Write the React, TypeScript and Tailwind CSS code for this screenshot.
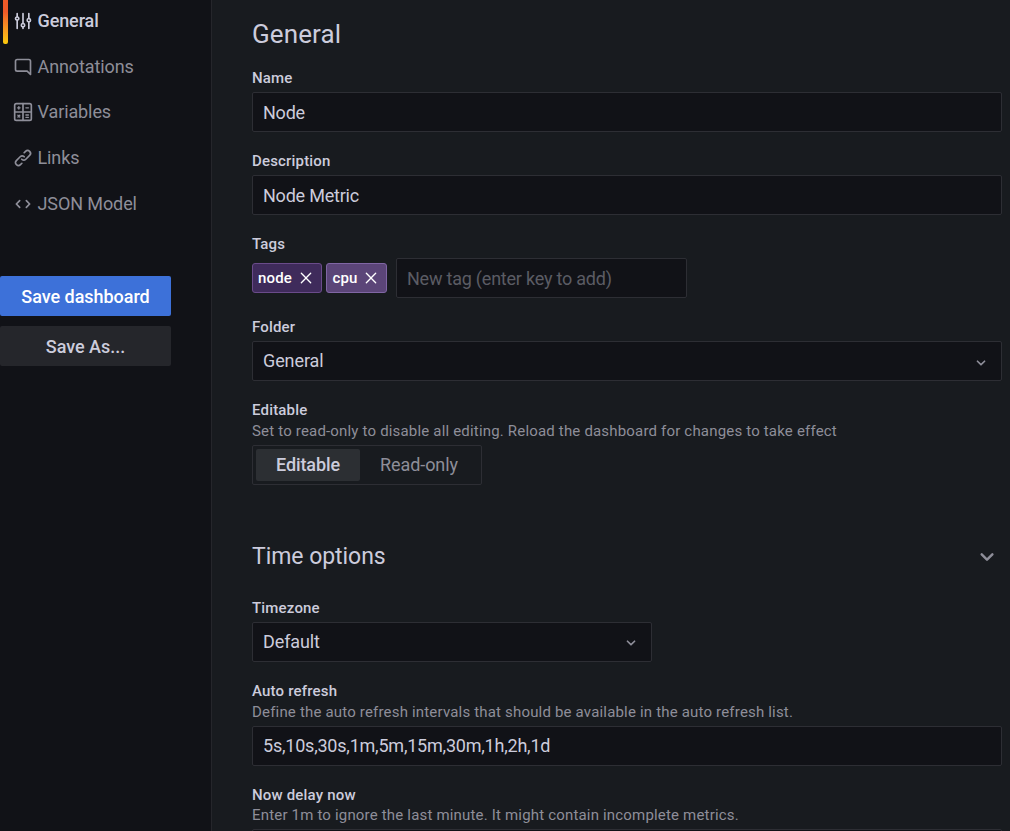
import type { ReactNode } from "react";

const paths = {
  sliders:
    "M20,8.18V3a1,1,0,0,0-2,0V8.18a3,3,0,0,0,0,5.64V21a1,1,0,0,0,2,0V13.82a3,3,0,0,0,0-5.64ZM19,12a1,1,0,1,1,1-1A1,1,0,0,1,19,12Zm-6,2.18V3a1,1,0,0,0-2,0V14.18a3,3,0,0,0,0,5.64V21a1,1,0,0,0,2,0V19.82a3,3,0,0,0,0-5.64ZM12,18a1,1,0,1,1,1-1A1,1,0,0,1,12,18ZM6,6.18V3A1,1,0,0,0,4,3V6.18a3,3,0,0,0,0,5.64V21a1,1,0,0,0,2,0V11.82A3,3,0,0,0,6,6.18ZM5,10A1,1,0,1,1,6,9,1,1,0,0,1,5,10Z",
  comment:
    "M19,2H5A3,3,0,0,0,2,5V15a3,3,0,0,0,3,3H16.59l3.7,3.71A1,1,0,0,0,21,22a.84.84,0,0,0,.38-.08A1,1,0,0,0,22,21V5A3,3,0,0,0,19,2Zm1,16.59-2.29-2.3A1,1,0,0,0,17,16H5a1,1,0,0,1-1-1V5A1,1,0,0,1,5,4H19a1,1,0,0,1,1,1Z",
  link: "M10,17.55,8.23,19.27a2.47,2.47,0,0,1-3.5-3.5l4.54-4.55a2.46,2.46,0,0,1,3.39-.09l.12.1a1,1,0,0,0,1.4-1.43A2.75,2.75,0,0,0,14,9.59a4.46,4.46,0,0,0-6.09.22L3.31,14.36a4.48,4.48,0,0,0,6.33,6.33L11.37,19A1,1,0,0,0,10,17.55ZM20.69,3.31a4.49,4.49,0,0,0-6.33,0L12.63,5A1,1,0,0,0,14,6.45l1.73-1.72a2.47,2.47,0,0,1,3.5,3.5l-4.54,4.55a2.46,2.46,0,0,1-3.39.09l-.12-.1a1,1,0,0,0-1.4,1.43,2.75,2.75,0,0,0,.23.21,4.47,4.47,0,0,0,6.09-.22l4.55-4.55A4.49,4.49,0,0,0,20.69,3.31Z",
  code: "M8.71,7.29a1,1,0,0,0-1.42,0l-4,4a1,1,0,0,0,0,1.42l4,4a1,1,0,0,0,1.42,0,1,1,0,0,0,0-1.42L5.41,12l3.3-3.29A1,1,0,0,0,8.71,7.29Zm12,4-4-4a1,1,0,0,0-1.42,1.42L18.59,12l-3.3,3.29a1,1,0,0,0,0,1.42,1,1,0,0,0,1.42,0l4-4A1,1,0,0,0,20.71,11.29Z",
  angleDown:
    "M17,9.17a1,1,0,0,0-1.41,0L12,12.71,8.46,9.17a1,1,0,0,0-1.41,0,1,1,0,0,0,0,1.42l4.24,4.24a1,1,0,0,0,1.42,0L17,10.59A1,1,0,0,0,17,9.17Z",
  times:
    "M13.41,12l6.3-6.29a1,1,0,1,0-1.42-1.42L12,10.59,5.71,4.29A1,1,0,0,0,4.29,5.71L10.59,12l-6.3,6.29a1,1,0,1,0,1.42,1.42L12,13.41l6.29,6.3a1,1,0,0,0,1.42-1.42Z",
};

function Icon({ name, className = "size-5" }: { name: keyof typeof paths; className?: string }) {
  return (
    <svg viewBox="0 0 24 24" fill="currentColor" className={`shrink-0 ${className}`}>
      <path d={paths[name]} />
    </svg>
  );
}

function CalculatorIcon() {
  return (
    <svg viewBox="0 0 24 24" fill="none" stroke="currentColor" strokeWidth="2" strokeLinecap="round" className="size-5 shrink-0">
      <rect x="2" y="2" width="20" height="20" rx="2" />
      <path d="M12 2v20M2 12h20" />
      <path d="M5.5 7h3M7 5.5v3M15.5 7h3M5.9 15.9l2.2 2.2M8.1 15.9l-2.2 2.2M15.5 15.6h3M15.5 18.4h3" strokeWidth="1.7" />
    </svg>
  );
}

function NavItem({ icon, label, active = false }: { icon: ReactNode; label: string; active?: boolean }) {
  return (
    <li
      className={
        active
          ? "relative flex h-[45.75px] items-center gap-[4.5px] pl-[13px] font-medium text-[#ccccdc]"
          : "relative flex h-[45.75px] items-center gap-[4.5px] pl-[13px] text-[#8e8e99]"
      }
    >
      {active && (
        <span className="absolute top-0 left-[3px] h-[46px] w-[5px] rounded-[2px] bg-linear-to-b from-[#f05a28] from-30% to-[#fbca0a]" />
      )}
      {icon}
      <span className="pb-px">{label}</span>
    </li>
  );
}

const frame = "flex h-10 items-center rounded-[2px] border border-[#2d2e34] bg-[#111217] px-[10px]";

function Field({ label, hint, children }: { label: string; hint?: ReactNode; children: ReactNode }) {
  return (
    <div className="mb-5">
      <div className="mb-[5px] text-[15px] leading-[18px] font-medium tracking-[0.18px]">
        {label}
        {hint}
      </div>
      {children}
    </div>
  );
}

function Hint({ children, className = "mt-[3px]" }: { children: ReactNode; className?: string }) {
  return <div className={`font-normal text-[#8e8e99] ${className}`}>{children}</div>;
}

function TextBox({ children, className = "" }: { children?: ReactNode; className?: string }) {
  return (
    <div className={`${frame} ${className}`}>
      <span className="tracking-[-0.22px]">{children}</span>
    </div>
  );
}

function Select({
  value,
  className = "",
  arrowClassName = "pt-[2px]",
}: {
  value: string;
  className?: string;
  arrowClassName?: string;
}) {
  return (
    <div className={`${frame} justify-between ${className}`}>
      <span className="pb-[2px]">{value}</span>
      <span className={`text-[#8e8e99] ${arrowClassName}`}>
        <Icon name="angleDown" />
      </span>
    </div>
  );
}

export default function App() {
  return (
    <div className="flex h-[831px] overflow-hidden bg-[#181b1f] font-[Roboto,sans-serif] text-[18px] leading-[27px] tracking-[-0.1px] text-[#ccccdc]">
      <aside className="w-[212px] shrink-0 border-r border-[#25262b] bg-[#111217]">
        <ul className="-mt-[2px]">
          <NavItem active icon={<Icon name="sliders" />} label="General" />
          <NavItem icon={<Icon name="comment" />} label="Annotations" />
          <NavItem icon={<CalculatorIcon />} label="Variables" />
          <NavItem icon={<Icon name="link" />} label="Links" />
          <NavItem icon={<Icon name="code" />} label="JSON Model" />
        </ul>
        <div className="mt-[49px] flex w-[171px] flex-col gap-[10px] font-medium tracking-[-0.03px]">
          <button className="h-10 rounded-[2px] bg-[#3d71d9] pt-px text-white">Save dashboard</button>
          <button className="h-10 rounded-[2px] bg-[#25262b] pt-px">Save As...</button>
        </div>
      </aside>
      <main className="w-[790px] shrink-0 pl-10">
        <h3 className="mt-[18px] mb-[19px] h-8 text-[26px] leading-8 tracking-[0.1px]">General</h3>
        <Field label="Name">
          <TextBox>Node</TextBox>
        </Field>
        <Field label="Description">
          <TextBox>Node Metric</TextBox>
        </Field>
        <Field label="Tags">
          <div className="flex items-center">
            <span className="mr-1 flex h-[30px] w-[70px] items-center justify-between rounded-[3px] border border-[#6a4b8a] bg-[#3f2b5b] pr-[7px] pl-[5px] text-[15px] font-medium tracking-[0.15px] text-white">
              <span className="pt-px">node</span>
              <Icon name="times" className="size-4" />
            </span>
            <span className="mr-[9px] flex h-[30px] w-[61px] items-center justify-between rounded-[3px] border border-[#8066a4] bg-[#5b4578] pr-[7px] pl-[5.5px] text-[15px] font-medium tracking-[0.15px] text-white">
              <span className="pt-px">cpu</span>
              <Icon name="times" className="size-4" />
            </span>
            <TextBox className="w-[291px] text-[#5b5c64]">New tag (enter key to add)</TextBox>
          </div>
        </Field>
        <Field label="Folder">
          <Select value="General" arrowClassName="pt-[3px]" />
        </Field>
        <Field
          label="Editable"
          hint={<Hint>Set to read-only to disable all editing. Reload the dashboard for changes to take effect</Hint>}
        >
          <div className="flex h-10 w-[230px] rounded-[2px] border border-[#2d2e34] p-[3px]">
            <div className="flex h-8 w-[104px] items-center justify-center rounded-[2px] bg-[#2c2f33] pb-[2px] font-medium">
              Editable
            </div>
            <div className="flex h-8 flex-1 items-center justify-center pb-[2px] text-[#8e8e99]">Read-only</div>
          </div>
        </Field>
        <div className="mt-14 mb-[26px] flex h-8 items-center justify-between">
          <h3 className="text-[23px] leading-8 tracking-[-0.05px]">Time options</h3>
          <span className="text-[#8e8e99]">
            <Icon name="angleDown" className="size-[30px]" />
          </span>
        </div>
        <Field label="Timezone">
          <Select value="Default" className="w-[400px]" />
        </Field>
        <Field
          label="Auto refresh"
          hint={<Hint>Define the auto refresh intervals that should be available in the auto refresh list.</Hint>}
        >
          <TextBox className="pb-[2px]">5s,10s,30s,1m,5m,15m,30m,1h,2h,1d</TextBox>
        </Field>
        <Field
          label="Now delay now"
          hint={<Hint className="mt-[2px]">Enter 1m to ignore the last minute. It might contain incomplete metrics.</Hint>}
        >
          <TextBox />
        </Field>
      </main>
    </div>
  );
}
